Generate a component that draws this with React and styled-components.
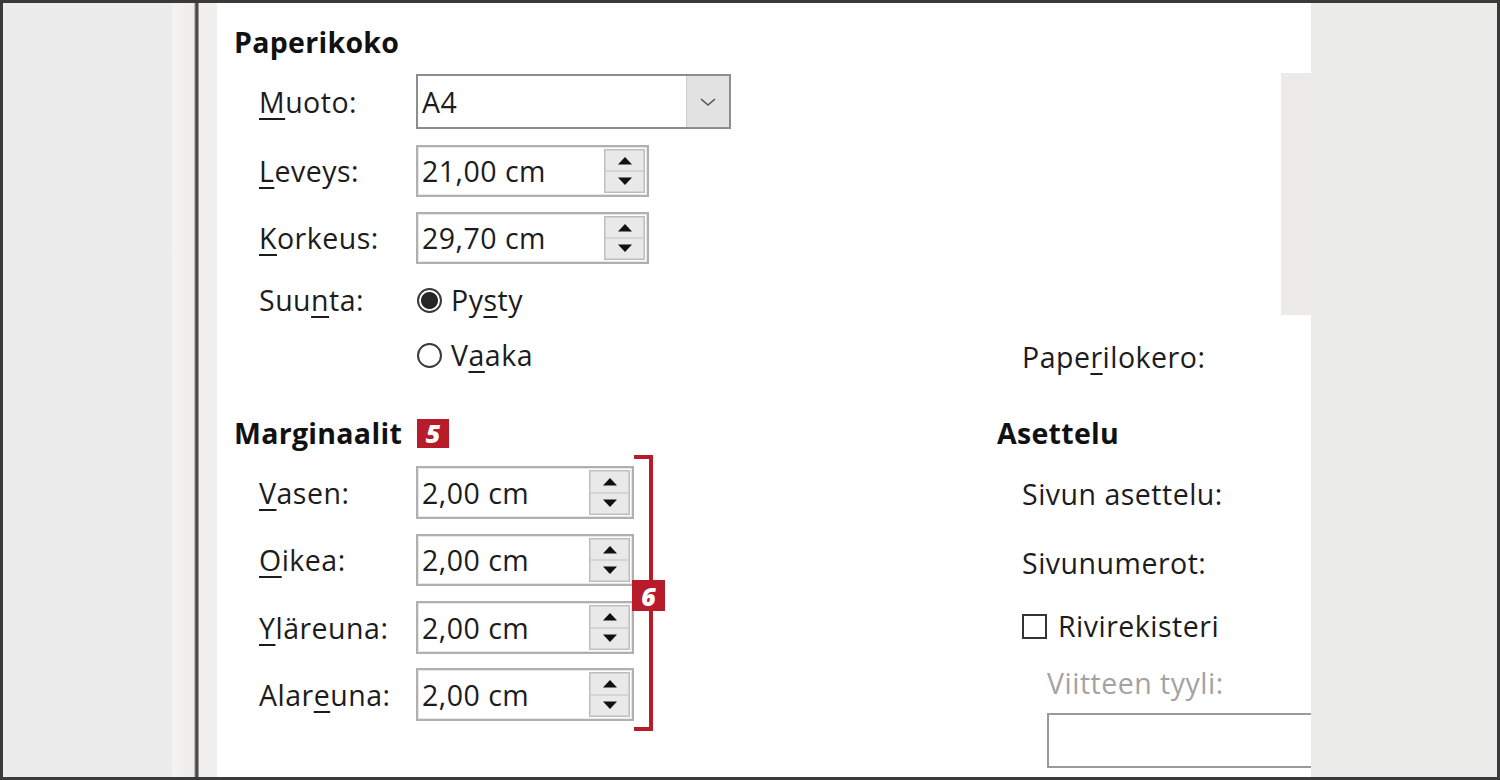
import styled, { createGlobalStyle } from "styled-components";

const Global = createGlobalStyle`
  html, body { margin: 0; padding: 0; background: #fff; }
  body { font-family: "Open Sans", "Noto Sans", sans-serif; }
  * { box-sizing: border-box; }
`;

const RED = "#b81c2b";

export default function App() {
  return (
    <>
      <Global />
      <Frame>
        <Gutter />
        <Sash />
        <Panel>
          <LeftCol>
            <Heading $top={19}>Paperikoko</Heading>
            <Row $top={12} $h={55}>
              <Label><u>M</u>uoto:</Label>
              <Select>
                <span>A4</span>
                <DropBtn>
                  <svg width="18" height="10" viewBox="0 0 18 10">
                    <path d="M2 2 L9 8 L16 2" fill="none" stroke="#555" strokeWidth="1.6" />
                  </svg>
                </DropBtn>
              </Select>
            </Row>
            <Row $top={16} $h={52}>
              <Label><u>L</u>eveys:</Label>
              <SpinField $w={233} value="21,00 cm" />
            </Row>
            <Row $top={15} $h={52}>
              <Label><u>K</u>orkeus:</Label>
              <SpinField $w={233} value="29,70 cm" />
            </Row>
            <Row $top={16} $h={40}>
              <Label>Suu<u>n</u>ta:</Label>
              <Radio $checked />
              <Option>Py<u>s</u>ty</Option>
            </Row>
            <Row $top={15} $h={40}>
              <Label />
              <Radio />
              <Option>V<u>a</u>aka</Option>
            </Row>
            <Heading $top={38}>
              Marginaalit <Badge>5</Badge>
            </Heading>
            <MarginGroup>
              <Row $top={13} $h={53}>
                <Label><u>V</u>asen:</Label>
                <SpinField $w={218} value="2,00 cm" />
              </Row>
              <Row $top={15} $h={52}>
                <Label><u>O</u>ikea:</Label>
                <SpinField $w={218} value="2,00 cm" />
              </Row>
              <Row $top={15} $h={53}>
                <Label><u>Y</u>läreuna:</Label>
                <SpinField $w={218} value="2,00 cm" />
              </Row>
              <Row $top={14} $h={53}>
                <Label>Alar<u>e</u>una:</Label>
                <SpinField $w={218} value="2,00 cm" />
              </Row>
              <Bracket>
                <BracketBadge>6</BracketBadge>
              </Bracket>
            </MarginGroup>
          </LeftCol>
          <RightCol>
            <Preview />
            <RRow $top={22}>
              <RLabel>Pape<u>r</u>ilokero:</RLabel>
            </RRow>
            <Heading $top={36}>Asettelu</Heading>
            <RRow $top={21}>
              <RLabel>Sivun asettelu:</RLabel>
            </RRow>
            <RRow $top={29}>
              <RLabel>Sivunumerot:</RLabel>
            </RRow>
            <RRow $top={23}>
              <Check />
              <Option>Rivirekisteri</Option>
            </RRow>
            <RRow $top={17} $indent={50}>
              <RLabel $muted>Viitteen tyyli:</RLabel>
            </RRow>
            <EmptyBox />
          </RightCol>
        </Panel>
        <RightGray />
      </Frame>
    </>
  );
}

function SpinField({ value, $w }) {
  return (
    <Field $w={$w}>
      <span>{value}</span>
      <Spin>
        <SpinBtn>
          <svg width="16" height="9" viewBox="0 0 16 9"><path d="M1 8.5 L8 1 L15 8.5 Z" fill="#111" /></svg>
        </SpinBtn>
        <SpinBtn>
          <svg width="16" height="9" viewBox="0 0 16 9"><path d="M1 0.5 L8 8 L15 0.5 Z" fill="#111" /></svg>
        </SpinBtn>
      </Spin>
    </Field>
  );
}

const Frame = styled.div`
  width: 1500px; height: 780px;
  border: 3px solid #3a3a3a;
  display: flex;
  overflow: hidden;
  color: #1c1c1c;
  font-size: 28.5px;
  letter-spacing: 0.5px;
  u { text-decoration-thickness: 2px; text-underline-offset: 5px; }
`;
const Gutter = styled.div`
  width: 169px; flex: none;
  background: #ececec;
`;
const Sash = styled.div`
  width: 45px; flex: none;
  background: linear-gradient(to right, #f4f3f1 0, #efedeb 22px, #8c8c8c 23px, #4a4a4a 24px, #4a4a4a 26px, #f1f0ee 27px, #f1f0ee 100%);
`;
const Panel = styled.div`
  flex: 1;
  background: #fff;
  display: flex;
  overflow: hidden;
`;
const LeftCol = styled.div`
  width: 780px; flex: none;
  padding-left: 17px;
  display: flex; flex-direction: column;
`;
const RightCol = styled.div`
  width: 420px; flex: none;
  padding-top: 70px;
  display: flex; flex-direction: column;
`;
const Heading = styled.div`
  margin-top: ${p => p.$top}px;
  height: 40px;
  display: flex; align-items: center;
  font-weight: 700;
  font-size: 28.5px;
  letter-spacing: 0.3px;
  color: #111;
`;
const Badge = styled.span`
  margin-left: 15px;
  width: 32px; height: 29px;
  background: ${RED};
  color: #fff;
  font-size: 25px; font-weight: 800; font-style: italic;
  letter-spacing: 0;
  display: flex; align-items: center; justify-content: center;
`;
const Row = styled.div`
  margin-top: ${p => p.$top}px;
  height: ${p => p.$h}px;
  padding-left: 25px;
  display: flex; align-items: center;
`;
const Label = styled.div`
  width: 157px; flex: none;
`;
const Select = styled.div`
  width: 315px; height: 100%;
  border: 2px solid #8d8d8d;
  display: flex; align-items: stretch;
  span { flex: 1; display: flex; align-items: center; padding-left: 4px; }
`;
const DropBtn = styled.div`
  width: 43px;
  background: #e2e2e2;
  border-left: 1px solid #cfcfcf;
  display: flex; align-items: center; justify-content: center;
`;
const Field = styled.div`
  width: ${p => p.$w}px; height: 100%;
  border: 2px solid #b0b0b0;
  box-shadow: inset 0 0 0 1px #e6e6e6;
  display: flex; align-items: center;
  padding: 0 2px 0 4px;
  span { flex: 1; white-space: nowrap; }
`;
const Spin = styled.div`
  width: 41px; height: calc(100% - 4px);
  border: 1px solid #bdbdbd;
  display: flex; flex-direction: column;
`;
const SpinBtn = styled.div`
  flex: 1;
  background: #e9e9e9;
  border: 1px solid #d4d4d4;
  display: flex; align-items: center; justify-content: center;
`;
const Radio = styled.span`
  width: 25px; height: 25px; flex: none;
  border-radius: 50%;
  border: 2px solid #3a3a3a;
  background: ${p => p.$checked ? "radial-gradient(circle, #262626 0, #262626 8px, #fff 9px)" : "#fff"};
  margin-left: 1px;
`;
const Option = styled.span`
  margin-left: 9px;
`;
const MarginGroup = styled.div`
  position: relative;
  display: flex; flex-direction: column;
`;
const Bracket = styled.div`
  position: absolute;
  left: 400px; top: 2px;
  width: 19px; height: 276px;
  border: 4px solid ${RED};
  border-left: none;
`;
const BracketBadge = styled(Badge)`
  position: absolute;
  margin: 0;
  right: -16px; top: 121px;
  width: 33px; height: 31px;
`;
const Preview = styled.div`
  margin-left: 284px;
  width: 100px; height: 242px;
  background: #ecebe9;
`;
const RRow = styled.div`
  margin-top: ${p => p.$top}px;
  height: 40px;
  padding-left: ${p => p.$indent ?? 25}px;
  display: flex; align-items: center;
`;
const RLabel = styled.span`
  color: ${p => p.$muted ? "#a3a3a3" : "#1c1c1c"};
  white-space: nowrap;
`;
const Check = styled.span`
  width: 25px; height: 25px; flex: none;
  border: 2px solid #333;
  background: #fff;
  margin-right: 2px;
`;
const EmptyBox = styled.div`
  margin-top: 10px;
  margin-left: 50px;
  width: 360px; height: 55px;
  border: 2px solid #9a9a9a;
`;
const RightGray = styled.div`
  width: 186px; flex: none;
  background: #ebebe9;
`;
